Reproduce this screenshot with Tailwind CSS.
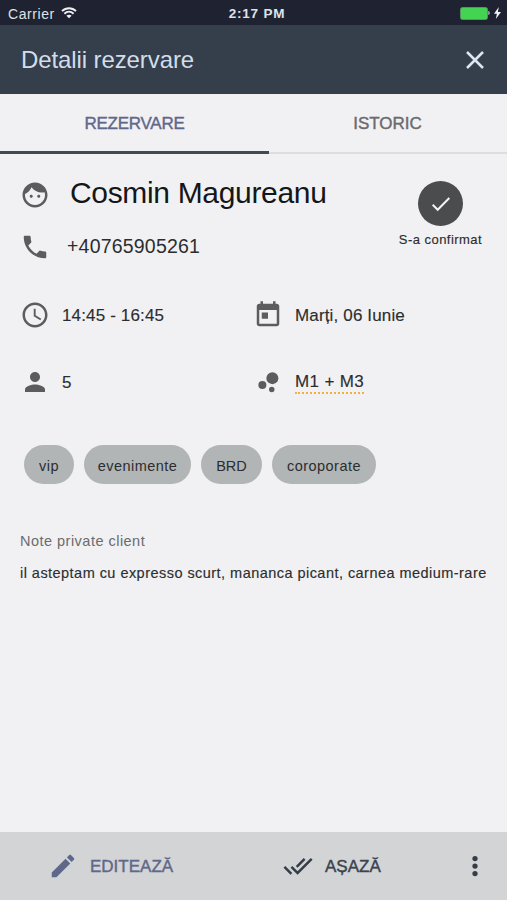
<!DOCTYPE html>
<html lang="ro">
<head>
<meta charset="utf-8">
<title>Detalii rezervare</title>
<script src="https://cdn.jsdelivr.net/npm/@tailwindcss/browser@4"></script>
</head>
<body class="w-[507px] h-[900px] overflow-hidden flex flex-col bg-[#f1f1f3] font-['Liberation_Sans',Arial,sans-serif] text-[#2c2d2f] whitespace-nowrap">
  <!-- status bar -->
  <div class="h-[25px] shrink-0 bg-[#1f2230] grid grid-cols-3 items-center text-[#dfe2e8] pt-[2px]">
    <div class="flex items-center pl-[8px] gap-[6px]">
      <span class="text-[14px] leading-[20px] tracking-[0.57px]">Carrier</span>
      <svg class="w-[16px] h-[12px] mb-[2px]" viewBox="0 0 16 12" fill="none" stroke="#eef0f4" stroke-width="1.9"><path d="M1 4.1C5 .2 11 .2 15 4.1M3.4 6.7c2.700-2.600 6.500-2.600 9.200 0"/><path d="M8 11.300L5.400 8.700c1.500-1.400 3.700-1.400 5.200 0z" fill="#eef0f4" stroke="none"/></svg>
    </div>
    <div class="text-center font-bold text-[13.500px] leading-[20px] tracking-[0.8px] pl-[7px]">2:17 PM</div>
    <div class="flex items-center justify-end pr-[6px] pb-[1px]">
      <div class="w-[28px] h-[13px] rounded-[2.500px] bg-[#43d551] border border-[#5c8f6c]"></div>
      <div class="w-[2px] h-[4px] rounded-r-full bg-[#8b93a0] mr-[4px]"></div>
      <svg class="w-[7px] h-[12px]" viewBox="0 0 7 12" fill="#f2f4f7"><path d="M4.800 0L0 6.800h2.900L1.800 12 7 4.900H3.900z"/></svg>
    </div>
  </div>
  <!-- title bar -->
  <header class="h-[69px] shrink-0 bg-[#343f4b] flex items-center justify-between pl-[21px] pr-[17px]">
    <h1 class="text-[24px] leading-[30px] tracking-[-0.1px] text-[#d3dde9]">Detalii rezervare</h1>
    <svg class="w-[30px] h-[30px]" viewBox="0 0 30 30" fill="none" stroke="#dce6f2" stroke-width="2.500"><path d="M7 7l16 16M23 7L7 23"/></svg>
  </header>
  <!-- tabs -->
  <nav class="h-[60px] shrink-0 flex text-[17px] [-webkit-text-stroke:0.4px]">
    <div class="w-[269px] border-b-[3px] border-[#3f4b57] flex items-center justify-center tracking-[-0.25px] text-[#5f688a] pt-[3px]">REZERVARE</div>
    <div class="flex-1 border-b-[2px] border-[#dcdddf] flex items-center justify-center text-[#6a6a6c] pt-[2px] pr-[1px]">ISTORIC</div>
  </nav>
  <!-- details -->
  <main class="flex-1 pl-[20px] pr-[20px] pt-[23px]">
    <div class="flex justify-between h-[92px]">
      <div class="flex flex-col">
        <div class="flex items-center h-[36px]">
          <svg class="w-[30px] h-[30px]" viewBox="0 0 24 24" fill="#5c5c5e"><path d="M9 11.750c-.69 0-1.250.56-1.250 1.250s.56 1.250 1.250 1.250 1.250-.56 1.250-1.250-.56-1.250-1.250-1.250zm6 0c-.69 0-1.250.56-1.250 1.250s.56 1.250 1.250 1.250 1.250-.56 1.250-1.250-.56-1.250-1.250-1.250zM12 2C6.480 2 2 6.480 2 12s4.480 10 10 10 10-4.480 10-10S17.520 2 12 2zm0 18c-4.410 0-8-3.590-8-8 0-.29.020-.58.050-.86 2.360-1.050 4.230-2.980 5.210-5.370C11.070 8.330 14.050 10 17.420 10c.78 0 1.530-.09 2.250-.26.210.71.330 1.470.33 2.260 0 4.410-3.590 8-8 8z"/></svg>
          <div class="pl-[20px] pb-[4px] text-[30px] leading-[34px] tracking-[-0.33px] text-[#151618]">Cosmin Magureanu</div>
        </div>
        <div class="flex items-center h-[36px] mt-[16px]">
          <svg class="w-[30px] h-[30px]" viewBox="0 0 24 24" fill="#5c5c5e"><path d="M6.620 10.790c1.440 2.830 3.760 5.140 6.590 6.590l2.200-2.200c.27-.27.67-.36 1.020-.24 1.120.37 2.330.57 3.570.57.55 0 1 .45 1 1V20c0 .55-.45 1-1 1-9.390 0-17-7.610-17-17 0-.55.45-1 1-1h3.500c.55 0 1 .45 1 1 0 1.250.2 2.450.57 3.570.110.35.030.74-.25 1.020l-2.200 2.200z"/></svg>
          <div class="pl-[17px] pb-[2px] text-[19.500px] leading-[24px] tracking-[0.2px]">+40765905261</div>
        </div>
      </div>
      <div class="flex flex-col items-center w-[93px] pt-[4px]">
        <div class="size-[45px] rounded-full bg-[#4a4c4e] flex items-center justify-center">
          <svg class="w-[20px] h-[16px]" viewBox="0 0 20 16" fill="none" stroke="#f3f3f3" stroke-width="2"><path d="M1.700 8.800l5 5L18.300 2"/></svg>
        </div>
        <div class="text-[13px] leading-[18px] tracking-[0.46px] mt-[5px] [-webkit-text-stroke:0.15px]">S-a confirmat</div>
      </div>
    </div>
    <div class="grid grid-cols-[233px_1fr] text-[17px] leading-[22px] tracking-[0.15px] mt-[29px] [-webkit-text-stroke:0.15px]">
      <div class="flex items-center h-[36px]">
        <svg class="w-[30px] h-[30px] mb-[2px]" viewBox="0 0 24 24" fill="#5c5c5e"><path d="M11.990 2C6.470 2 2 6.480 2 12s4.470 10 9.990 10C17.520 22 22 17.520 22 12S17.520 2 11.990 2zM12 20c-4.420 0-8-3.580-8-8s3.580-8 8-8 8 3.580 8 8-3.580 8-8 8zm.5-13H11v6l5.250 3.150.75-1.230-4.500-2.670z"/></svg>
        <div class="pl-[12px]">14:45 - 16:45</div>
      </div>
      <div class="flex items-center h-[36px]">
        <svg class="w-[30px] h-[30px] mb-[2px]" viewBox="0 0 24 24" fill="#5c5c5e"><path d="M19 3h-1V1h-2v2H8V1H6v2H5c-1.110 0-1.990.9-1.990 2L3 19c0 1.100.89 2 2 2h14c1.100 0 2-.9 2-2V5c0-1.100-.9-2-2-2zm0 16H5V8h14v11zM7 10h5v5H7z"/></svg>
        <div class="pl-[12px]">Marți, 06 Iunie</div>
      </div>
      <div class="flex items-center h-[36px] mt-[31px]">
        <svg class="w-[30px] h-[30px] mb-[2px]" viewBox="0 0 24 24" fill="#5c5c5e"><path d="M12 12c2.210 0 4-1.790 4-4s-1.790-4-4-4-4 1.790-4 4 1.790 4 4 4zm0 2c-2.670 0-8 1.340-8 4v2h16v-2c0-2.660-5.330-4-8-4z"/></svg>
        <div class="pl-[12px]">5</div>
      </div>
      <div class="flex items-center h-[36px] mt-[31px]">
        <svg class="w-[30px] h-[30px] mb-[2px]" viewBox="0 0 24 24" fill="#5c5c5e"><circle cx="7.500" cy="14.400" r="3.200"/><circle cx="15" cy="18" r="2.200"/><circle cx="15.500" cy="8.900" r="4.800"/></svg>
        <div class="ml-[12px] border-b-[2px] pb-0 -mt-[2px] leading-[21px] tracking-[0.35px] border-dotted border-[#f0b23c]">M1 + M3</div>
      </div>
    </div>
    <div class="flex gap-[10px] pl-[4px] mt-[44px] text-[14.500px] tracking-[0.45px] [&>span]:h-[39px] [&>span]:rounded-full [&>span]:bg-[#b1b5b6] [&>span]:flex [&>span]:items-center [&>span]:justify-center [&>span]:pt-[4px]">
      <span class="w-[50px]">vip</span>
      <span class="w-[107px]">evenimente</span>
      <span class="w-[61px] tracking-[0px]">BRD</span>
      <span class="w-[104px]">coroporate</span>
    </div>
    <div class="mt-[47px] text-[14.500px] leading-[20px] tracking-[0.48px] text-[#6b6b6d]">Note private client</div>
    <div class="mt-[12px] text-[14.500px] leading-[20px] tracking-[0.46px] [-webkit-text-stroke:0.15px]">il asteptam cu expresso scurt, mananca picant, carnea medium-rare</div>
  </main>
  <!-- actions -->
  <footer class="h-[68px] shrink-0 bg-[#d2d4d5] flex items-center text-[17px] [-webkit-text-stroke:0.4px]">
    <div class="w-[234px] flex items-center pl-[48px] text-[#5f688a]">
      <svg class="w-[30px] h-[30px]" viewBox="0 0 24 24" fill="#5f688a"><path d="M3 17.250V21h3.750L17.810 9.940l-3.750-3.750L3 17.250zM20.710 7.040c.39-.39.39-1.020 0-1.410l-2.340-2.340c-.39-.39-1.020-.39-1.410 0l-1.830 1.830 3.750 3.750 1.830-1.830z"/></svg>
      <span class="pl-[12px] pt-[1px]">EDITEAZĂ</span>
    </div>
    <div class="flex-1 flex items-center pl-[49px] text-[#3a434e]">
      <svg class="w-[30px] h-[30px]" viewBox="0 0 24 24" fill="#343d48"><path d="M18 7l-1.410-1.410-6.340 6.340 1.410 1.410L18 7zm4.240-1.410L11.660 16.170 7.480 12l-1.410 1.410L11.660 19l12-12-1.420-1.410zM.41 13.410L6 19l1.410-1.410L1.830 12 .41 13.410z"/></svg>
      <span class="pl-[12px] pt-[1px]">AȘAZĂ</span>
    </div>
    <svg class="w-[30px] h-[30px] mr-[17px]" viewBox="0 0 24 24" fill="#343d48"><circle cx="12" cy="6" r="2.100"/><circle cx="12" cy="12" r="2.100"/><circle cx="12" cy="18" r="2.100"/></svg>
  </footer>
</body>
</html>
